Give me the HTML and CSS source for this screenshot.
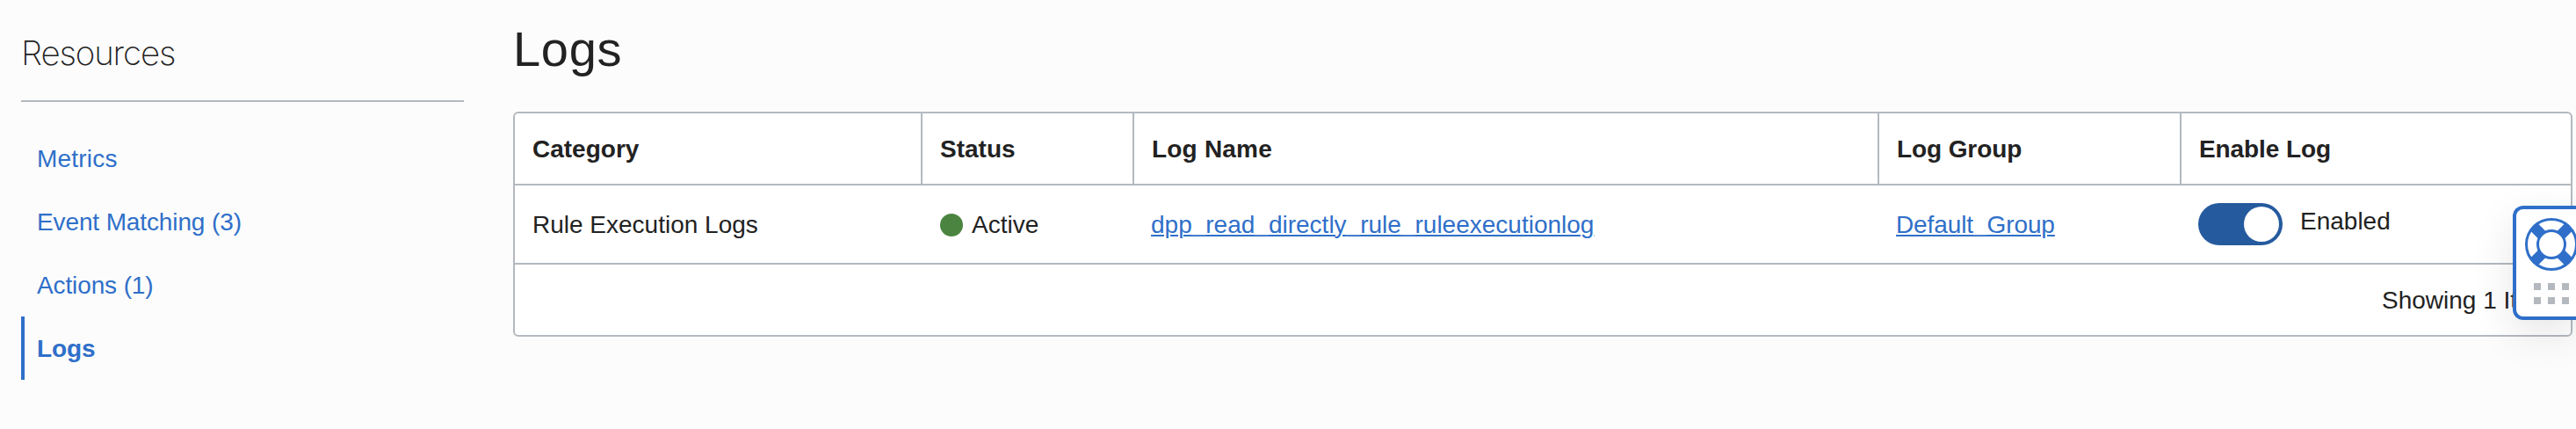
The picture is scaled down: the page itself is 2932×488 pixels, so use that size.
FILE: index.html
```
<!DOCTYPE html>
<html lang="en">
<head>
<meta charset="utf-8">
<title>Logs</title>
<link rel="stylesheet" href="styles.css">
</head>
<body>
<div class="page">
  <nav class="sidebar">
    <h2 class="sidebar-title">Resources</h2>
    <a class="nav-item wide">Metrics</a>
    <a class="nav-item">Event Matching (3)</a>
    <a class="nav-item">Actions (1)</a>
    <a class="nav-item active">Logs</a>
  </nav>
  <main class="content">
    <h1 class="title">Logs</h1>
    <div class="table">
      <div class="row head">
        <div class="cell">Category</div>
        <div class="cell">Status</div>
        <div class="cell wide">Log Name</div>
        <div class="cell tight">Log Group</div>
        <div class="cell tight">Enable Log</div>
      </div>
      <div class="row body">
        <div class="cell">Rule Execution Logs</div>
        <div class="cell status"><i class="dot"></i><span>Active</span></div>
        <div class="cell"><a class="link">dpp<span class="us">_</span>read<span class="us">_</span>directly<span class="us">_</span>rule<span class="us">_</span>ruleexecutionlog</a></div>
        <div class="cell tight"><a class="link">Default<span class="us">_</span>Group</a></div>
        <div class="cell toggle-cell"><i class="toggle"><i class="knob"></i></i><span class="toggle-label">Enabled</span></div>
      </div>
      <div class="foot">Showing 1 Item</div>
    </div>
  </main>
</div>
<aside class="help">
  <svg class="ring" viewBox="0 0 60 60" width="60" height="60">
    <circle cx="30" cy="30" r="28.5" fill="#fff" stroke="#2f6fc9" stroke-width="3"/>
    <path d="M10.5 10.5L49.5 49.5M49.5 10.5L10.5 49.5" stroke="#2f6fc9" stroke-width="12"/>
    <circle cx="30" cy="30" r="15.5" fill="#fff" stroke="#2f6fc9" stroke-width="3"/>
  </svg>
  <div class="grip"><i></i><i></i><i></i><i></i><i></i><i></i></div>
</aside>
</body>
</html>
```
FILE: styles.css
```
* { box-sizing: border-box; }
body {
  margin: 0;
  height: 488px;
  overflow: hidden;
  background: #fcfcfc;
  color: #222;
  font: 28px/40px "Liberation Sans", Arial, sans-serif;
}
.page { display: flex; gap: 56px; padding-left: 24px; }
.sidebar { width: 504px; }
.sidebar-title {
  margin: 0 0 28px;
  height: 116px;
  padding-top: 36px;
  border-bottom: 2px solid #b3b9bf;
  font: 150 38.5px/48px Inter, sans-serif;
  letter-spacing: -1.15px;
}
.nav-item {
  display: flex;
  align-items: center;
  height: 72px;
  padding: 2px 0 0 14px;
  border-left: 4px solid transparent;
  color: #2f6fc9;
  letter-spacing: -.12px;
}
.nav-item.active { border-color: #2f6fc9; font-weight: 700; }
.nav-item.wide { letter-spacing: .2px; }
.content { width: 2344px; }
.title {
  margin: 0;
  height: 127px;
  padding-top: 24px;
  font: 400 56px/64px "Liberation Sans", Arial, sans-serif;
  letter-spacing: .7px;
}
.table {
  height: 256px;
  border: 2px solid #b3b9bf;
  border-radius: 6px;
  background: #fff;
}
.row { display: grid; grid-template-columns: 462px 241px 848px 344px 1fr; border-bottom: 2px solid #b3b9bf; }
.cell { display: flex; align-items: center; padding: 2px 0 0 20px; }
.body .cell:nth-child(n+3) { padding-left: 19px; }
.head { height: 82px; font-weight: 700; }
.head .cell + .cell { border-left: 2px solid #b3b9bf; }
.body .cell + .cell { border-left: 2px solid transparent; }
.body { height: 90px; }
.wide { letter-spacing: .2px; }
.tight { letter-spacing: -.1px; }
.status { gap: 10px; }
.dot { width: 26px; height: 26px; border-radius: 50%; background: #4b8440; }
.link {
  color: #2f6fc9;
  text-decoration: underline;
  text-decoration-thickness: 2px;
  text-underline-offset: 2px;
}
/* Raise underscores so they sit level with the link underline. */
.us { display: inline-block; position: relative; top: -2px; }
.cell.toggle-cell { padding-top: 0; }
.toggle {
  display: flex;
  justify-content: flex-end;
  width: 96px;
  height: 48px;
  padding: 4px;
  border-radius: 24px;
  background: #255a9e;
}
.knob { width: 40px; height: 40px; border-radius: 50%; background: #fff; }
.toggle-label { margin: -6px 0 0 20px; }
.foot { display: flex; align-items: center; justify-content: flex-end; height: 80px; padding: 2px 22px 0 0; }
.help {
  position: absolute;
  left: 2860px;
  top: 234px;
  width: 72px;
  height: 130px;
  padding: 10px 0 0 10px;
  border: 4px solid #2f6fc9;
  border-right: 0;
  border-radius: 12px 0 0 12px;
  background: #fff;
  box-shadow: 0 16px 48px rgba(0, 0, 0, .1);
  overflow: hidden;
}
.ring { display: block; }
.grip { display: grid; grid-template-columns: repeat(3, 8px); gap: 8px; padding: 14px 0 0 10px; }
.grip i { height: 8px; background: #b3b9bf; }
```
